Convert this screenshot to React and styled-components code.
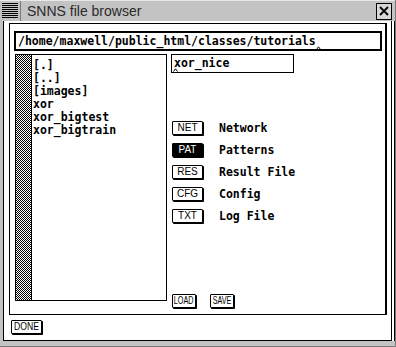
import React from "react";
import styled, { createGlobalStyle } from "styled-components";

const GlobalStyle = createGlobalStyle`
  html, body {
    margin: 0;
    padding: 0;
    background: #c3c3c3;
  }
`;

const mono = `"DejaVu Sans Mono", "Liberation Mono", monospace`;
const sans = `"Liberation Sans", Arial, sans-serif`;

const Window = styled.div`
  width: 396px;
  height: 347px;
  box-sizing: border-box;
  background: #c3c3c3;
  display: flex;
  flex-direction: column;
  border-right: 1px solid #7a7a7a;
  border-bottom: 1px solid #7a7a7a;
  overflow: hidden;
`;

const TitleBar = styled.div`
  height: 21px;
  display: flex;
  align-items: center;
  border-top: 1px solid #e8e8e8;
  box-sizing: border-box;
`;

const MenuBox = styled.div`
  width: 21px;
  height: 20px;
  border-right: 1px solid #7a7a7a;
  box-sizing: border-box;
  display: flex;
  align-items: center;
  justify-content: center;
`;

const Title = styled.div`
  font-family: ${sans};
  font-size: 14px;
  color: #2a2a2a;
  margin-left: 6px;
  flex: 1;
`;

const CloseBox = styled.div`
  width: 16px;
  height: 17px;
  margin-right: 3px;
  border: 1px solid #000;
  box-sizing: border-box;
  background: #d6d6d6;
  display: flex;
  align-items: center;
  justify-content: center;
`;

const Frame = styled.div`
  flex: 1;
  padding: 0 3px 5px 3px;
  display: flex;
`;

const Client = styled.div`
  flex: 1;
  background: #fff;
  border: 1px solid #000;
  border-top: none;
  box-shadow: 2px 0 0 #fff, 3px 0 0 #000;
  padding: 2px 4px 5px 5px;
  display: flex;
  flex-direction: column;
  gap: 5px;
`;

const Panel = styled.div`
  border: 1px solid #000;
  border-right-width: 2px;
  height: 292px;
  box-sizing: border-box;
  padding: 7px 3px 0 4px;
  display: flex;
  flex-direction: column;
  gap: 3px;
`;

const PathBox = styled.div`
  height: 20px;
  border: 2px solid #000;
  box-sizing: border-box;
  padding: 0 2px;
  font-family: ${mono};
  font-weight: bold;
  font-size: 11.5px;
  line-height: 16px;
  color: #000;
  white-space: nowrap;
`;

const Caret = styled.svg`
  display: inline-block;
  width: 5px;
  height: 4px;
  vertical-align: -5px;
`;

const Row = styled.div`
  display: flex;
  gap: 4px;
  height: 254px;
`;

const ListBox = styled.div`
  width: 152px;
  height: 247px;
  margin-left: 1px;
  border: 1px solid #000;
  box-sizing: border-box;
  display: flex;
`;

const Scrollbar = styled.div`
  width: 15px;
  border-right: 1px solid #000;
  background: repeating-conic-gradient(#000 0 25%, #fff 0 50%) 0 0 / 2px 2px;
`;

const Items = styled.div`
  padding: 4px 0 0 1px;
  font-family: ${mono};
  font-weight: bold;
  font-size: 11.5px;
  line-height: 13px;
`;

const Side = styled.div`
  display: flex;
  flex-direction: column;
`;

const NameBox = styled.div`
  position: relative;
  width: 123px;
  height: 19px;
  border: 1px solid #000;
  box-sizing: border-box;
  padding: 0 2px;
  font-family: ${mono};
  font-weight: bold;
  font-size: 11.5px;
  line-height: 16px;
`;

const NameCaret = styled(Caret)`
  position: absolute;
  left: 1px;
  bottom: 0;
`;

const Types = styled.div`
  margin-top: 48px;
  display: flex;
  flex-direction: column;
  gap: 8px;
  margin-left: 1px;
`;

const TypeRow = styled.div`
  display: flex;
  align-items: center;
  gap: 16px;
  height: 14px;
`;

const Button = styled.div`
  width: ${(p) => p.$w || 31}px;
  height: 14px;
  box-sizing: border-box;
  border: 1px solid #000;
  border-radius: 1px;
  box-shadow: 1px 1px 0 #000;
  background: ${(p) => (p.$on ? "#000" : "#fff")};
  color: ${(p) => (p.$on ? "#fff" : "#000")};
  font-family: ${sans};
  font-size: 10px;
  line-height: 12px;
  text-align: center;
  white-space: nowrap;
  display: flex;
  justify-content: center;
`;

const Narrow = styled.span`
  display: inline-block;
  transform: scaleX(${(p) => p.$sx || 0.8});
`;

const Label = styled.div`
  font-family: ${mono};
  font-weight: bold;
  font-size: 11.5px;
`;

const Actions = styled.div`
  margin-top: auto;
  margin-left: 1px;
  display: flex;
  gap: 14px;
`;

const BottomBar = styled.div`
  padding-left: 2px;
`;

const files = ["[.]", "[..]", "[images]", "xor", "xor_bigtest", "xor_bigtrain"];
const types = [
  ["NET", "Network"],
  ["PAT", "Patterns", true],
  ["RES", "Result File"],
  ["CFG", "Config"],
  ["TXT", "Log File"],
];

const CaretMark = ({ as: Comp = Caret }) => (
  <Comp viewBox="0 0 5 4">
    <path d="M0.5 3.5 L2.5 0.8 L4.5 3.5" fill="none" stroke="#000" strokeWidth="1" />
  </Comp>
);

export default function App() {
  return (
    <>
      <GlobalStyle />
      <Window>
        <TitleBar>
          <MenuBox>
            <svg width="16" height="16" viewBox="0 0 16 16">
              {[1, 3, 5, 7, 9, 11, 13, 15].map((y) => (
                <line key={y} x1="0" x2="16" y1={y - 0.5} y2={y - 0.5} stroke="#000" strokeWidth="1" />
              ))}
            </svg>
          </MenuBox>
          <Title>SNNS file browser</Title>
          <CloseBox>
            <svg width="10" height="10" viewBox="0 0 10 10">
              <path d="M1 1 L9 9 M9 1 L1 9" stroke="#000" strokeWidth="1.8" />
            </svg>
          </CloseBox>
        </TitleBar>
        <Frame>
          <Client>
            <Panel>
              <PathBox>
                /home/maxwell/public_html/classes/tutorials
                <CaretMark />
              </PathBox>
              <Row>
                <ListBox>
                  <Scrollbar />
                  <Items>
                    {files.map((f) => (
                      <div key={f}>{f}</div>
                    ))}
                  </Items>
                </ListBox>
                <Side>
                  <NameBox>
                    xor_nice
                    <CaretMark as={NameCaret} />
                  </NameBox>
                  <Types>
                    {types.map(([b, l, on]) => (
                      <TypeRow key={b}>
                        <Button $on={on}>{b}</Button>
                        <Label>{l}</Label>
                      </TypeRow>
                    ))}
                  </Types>
                  <Actions>
                    <Button $w={24}><Narrow $sx={0.72}>LOAD</Narrow></Button>
                    <Button $w={24}><Narrow $sx={0.72}>SAVE</Narrow></Button>
                  </Actions>
                </Side>
              </Row>
            </Panel>
            <BottomBar>
              <Button $w={31}><Narrow $sx={0.86}>DONE</Narrow></Button>
            </BottomBar>
          </Client>
        </Frame>
      </Window>
    </>
  );
}
